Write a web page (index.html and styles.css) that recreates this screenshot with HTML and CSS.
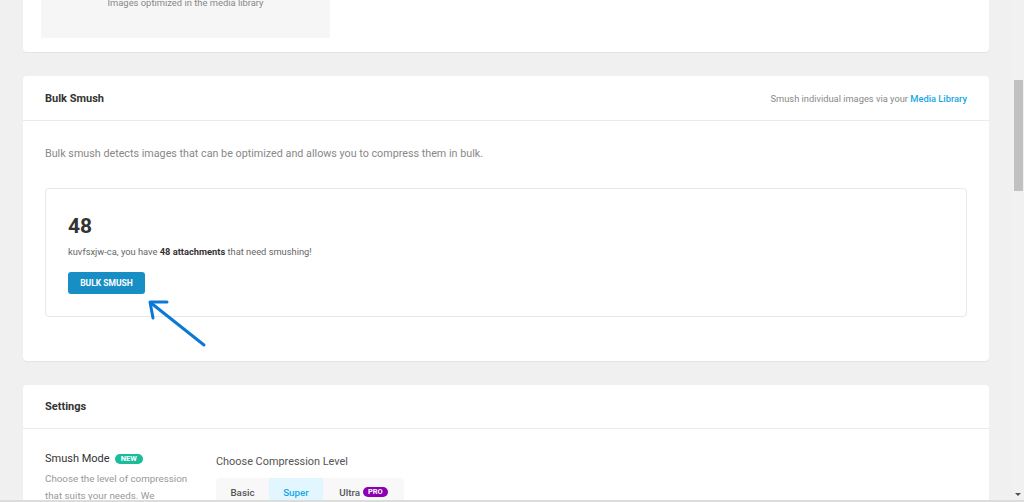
FILE: index.html
```html
<!DOCTYPE html>
<html>
<head>
<meta charset="utf-8">
<link rel="stylesheet" href="styles.css">
</head>
<body>
<div class="page">
  <main class="main">
    <section class="card card-top">
      <div class="top-body">
        <div class="stat-box">
          <div class="stat-label">Images optimized in the media library</div>
        </div>
      </div>
    </section>

    <section class="card">
      <header class="card-head">
        <h2 class="card-title">Bulk Smush</h2>
        <div class="head-note">Smush individual images via your <a class="link" href="#">Media Library</a></div>
      </header>
      <div class="card-body bulk-body">
        <p class="desc">Bulk smush detects images that can be optimized and allows you to compress them in bulk.</p>
        <div class="bulk-box">
          <div class="big-num">48</div>
          <p class="bulk-text">kuvfsxjw-ca, you have <strong>48 attachments</strong> that need smushing!</p>
          <button class="btn">BULK SMUSH</button>
          <svg class="arrow" width="70" height="60" viewBox="0 0 70 60">
            <line x1="63" y1="52" x2="10" y2="10" stroke="#0a78d7" stroke-width="3" stroke-linecap="round"/>
            <polyline points="26,9 9,9 12,25" fill="none" stroke="#0a78d7" stroke-width="3" stroke-linecap="round" stroke-linejoin="round"/>
          </svg>
        </div>
      </div>
    </section>

    <section class="card">
      <header class="card-head card-head-s">
        <h2 class="card-title">Settings</h2>
      </header>
      <div class="card-body settings-body">
        <div class="set-label">
          <div class="set-name">Smush Mode <span class="badge badge-new">NEW</span></div>
          <p class="set-desc">Choose the level of compression that suits your needs. We recommend Super.</p>
        </div>
        <div class="set-field">
          <div class="field-title">Choose Compression Level</div>
          <div class="tabs">
            <span class="tab">Basic</span>
            <span class="tab tab-active">Super</span>
            <span class="tab tab-ultra">Ultra <span class="badge badge-pro">PRO</span></span>
          </div>
        </div>
      </div>
    </section>
  </main>
  <div class="scrollbar">
    <div class="sb-up"></div>
    <div class="sb-thumb"></div>
    <div class="sb-fill"></div>
    <div class="sb-down"></div>
  </div>
</div>
<div class="bottom-edge"></div>
</body>
</html>
```

FILE: styles.css
```css
* { box-sizing: border-box; }
html, body { margin: 0; padding: 0; height: 100%; overflow: hidden; }
body {
  background: #f0f0f0;
  font-family: Roboto, "Liberation Sans", Arial, sans-serif;
  color: #666;
}
.page { display: flex; height: 502px; }
.main {
  width: 1012px;
  padding-left: 23px;
  padding-right: 23px;
  margin-top: -40px;
  display: flex;
  flex-direction: column;
  gap: 24px;
}
.card {
  background: #fff;
  border-radius: 4px;
  box-shadow: 0 1px 0 #e4e4e4;
  position: relative;
}
.top-body { padding: 0 18px 14px; }
.stat-box {
  width: 289px;
  background: #f6f6f6;
  height: 78px;
  display: flex;
  flex-direction: column;
  align-items: center;
  justify-content: flex-end;
  padding-bottom: 29px;
}
.stat-label { font-size: 9.4px; color: #888; line-height: 12px; }

.card-head {
  height: 45px;
  border-bottom: 1px solid #ebebeb;
  display: flex;
  align-items: center;
  justify-content: space-between;
  padding: 0 22px;
}
.card-head-s { height: 44px; }
.card-title { margin: 0; font-size: 11px; font-weight: 700; color: #333; }
.head-note { font-size: 9.3px; color: #888; }
.link { color: #17a8e3; text-decoration: none; font-weight: 500; }

.bulk-body { padding: 26px 22px 44px; }
.desc { margin: 0 0 27px; font-size: 10.75px; line-height: 14px; color: #888; }
.bulk-box {
  border: 1px solid #e8e8e8;
  border-radius: 4px;
  padding: 24px 22px 22px;
  position: relative;
}
.big-num { font-size: 21px; font-weight: 700; color: #333; line-height: 26px; }
.bulk-text { margin: 6px 0 13px; font-size: 9.3px; line-height: 14px; color: #666; }
.bulk-text strong { color: #333; font-weight: 700; }
.btn {
  display: block;
  background: #178ec4;
  color: #fff;
  border: none;
  border-radius: 3px;
  height: 22px;
  width: 77px;
  font-family: inherit;
  font-size: 8.5px;
  font-weight: 700;
  padding: 0;
}
.arrow { position: absolute; left: 95px; top: 104px; }

.settings-body { padding: 22px 22px 0; display: flex; }
.set-label { width: 171px; }
.set-name { font-size: 11px; color: #333; line-height: 16px; display: flex; align-items: center; gap: 5px; }
.badge {
  display: inline-block;
  font-size: 7.5px;
  font-weight: 700;
  color: #fff;
  border-radius: 8px;
  line-height: 10px;
  padding: 0 6px;
}
.badge-new { background: #1abc9c; }
.badge-pro { background: #8d00b1; padding: 0 5px; }
.set-desc { margin: 3px 0 0; font-size: 9.8px; line-height: 17px; color: #999; width: 148px; }
.set-field { padding-top: 3px; }
.field-title { font-size: 10.9px; color: #555; line-height: 16px; }
.tabs {
  margin-top: 8px;
  display: flex;
  background: #f8f8f8;
  border-radius: 4px;
  width: 188px;
  height: 30px;
}
.tab {
  display: flex;
  align-items: center;
  justify-content: center;
  font-size: 9.8px;
  color: #555;
  font-weight: 500;
  height: 28px;
}
.tab:nth-child(1) { width: 53px; }
.tab-active { width: 54px; background: #e1f6ff; color: #17a8e3; }
.tab-ultra { width: 81px; gap: 3px; }

.scrollbar { width: 12px; background: #f1f1f1; display: flex; flex-direction: column; align-items: center; }
.sb-up { height: 80px; }
.sb-thumb { width: 9px; height: 111px; background: #c1c1c1; margin-left: 1px; }
.sb-fill { flex: 1; }
.sb-down {
  width: 0; height: 0;
  border-left: 3px solid transparent;
  border-right: 3px solid transparent;
  border-top: 3px solid #505050;
  margin-bottom: 6px;
}
.bottom-edge { position: fixed; left: 0; right: 0; bottom: 0; height: 2px; background: #dcdcdc; }
```
